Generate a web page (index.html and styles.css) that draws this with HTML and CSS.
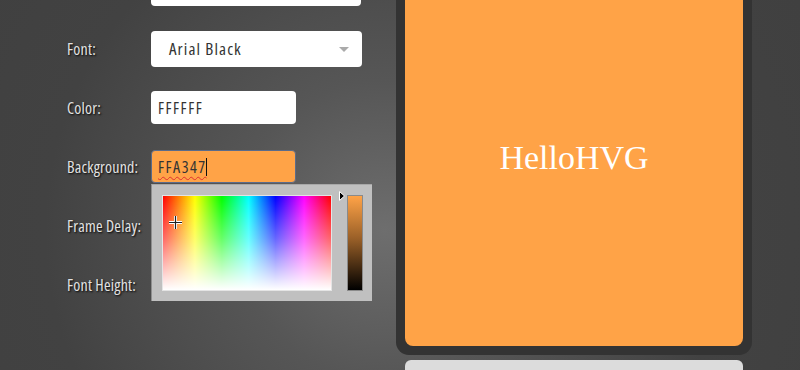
FILE: index.html
```html
<!DOCTYPE html>
<html lang="en">
<head>
    <meta charset="UTF-8">
    <meta name="viewport" content="width=device-width, initial-scale=1.0">
    <title>HVG Text Generator</title>
    <link rel="stylesheet" href="styles.css">
</head>
<body>
    <div class="page">
        <div class="settings">
            <!-- first row is scrolled out of view -->
            <div class="row">
                <span class="label"></span>
                <div class="field wide"></div>
            </div>
            <div class="row">
                <label class="label">Font:</label>
                <div class="field select">
                    Arial Black
                    <span class="caret"></span>
                </div>
            </div>
            <div class="row">
                <label class="label">Color:</label>
                <div class="field">FFFFFF</div>
            </div>
            <div class="row">
                <label class="label">Background:</label>
                <div class="field focused">
                    <span class="typo">FFA347</span><span class="cursor"></span>
                    <!-- colour picker popup -->
                    <div class="picker">
                        <div class="spectrum">
                            <svg class="cross" width="15" height="15" viewBox="0 0 15 15">
                                <path d="M7.5 1v13M1 7.5h13" stroke="#fff" stroke-width="3"/>
                                <path d="M7.5 1v13M1 7.5h13" stroke="#222" stroke-width="1.2"/>
                            </svg>
                        </div>
                        <div class="slider-wrap">
                            <svg class="pointer" width="6" height="10" viewBox="0 0 6 10">
                                <path d="M0.5 0.5L5.5 5L0.5 9.5Z" fill="#000" stroke="#fff" stroke-width="1"/>
                            </svg>
                            <div class="slider"></div>
                        </div>
                    </div>
                </div>
            </div>
            <div class="row">
                <label class="label">Frame Delay:</label>
                <div class="field">100</div>
            </div>
            <div class="row">
                <label class="label">Font Height:</label>
                <div class="field">32</div>
            </div>
        </div>

        <div class="preview-col">
            <div class="frame">
                <div class="preview">HelloHVG</div>
            </div>
            <div class="actions"></div>
        </div>
    </div>
</body>
</html>
```

FILE: styles.css
```css
body {
    margin: 0;
    height: 370px;
    overflow: hidden;
    font-family: "Open Sans", "Liberation Sans", sans-serif;
    background: radial-gradient(circle at 385px 230px, #6e6e6e 0, #565656 150px, #424242 340px, #404040 100%);
    background-color: #404040;
}
.page {
    display: flex;
    margin-top: -40px;
}
.settings {
    width: 329px;
    padding-left: 67px;
}
.row {
    display: flex;
    align-items: center;
    height: 59px;
}
.label {
    width: 84px;
    font-size: 16px;
    font-stretch: condensed;
    letter-spacing: 0.2px;
    color: #e2e2e2;
    text-shadow: 1px 1px 2px #000;
}
.field {
    position: relative;
    box-sizing: border-box;
    width: 145px;
    height: 33px;
    padding: 0 7px;
    display: flex;
    align-items: center;
    background: #fff;
    border-radius: 4px;
    font-size: 16px;
    font-stretch: condensed;
    letter-spacing: 1.5px;
    color: #333;
}
.wide {
    width: 210px;
}
.select {
    width: 211px;
    height: 36px;
    padding-left: 18px;
    font-size: 17px;
    letter-spacing: 1.1px;
}
.caret {
    position: absolute;
    right: 13px;
    top: 16px;
    border-left: 5px solid transparent;
    border-right: 5px solid transparent;
    border-top: 5px solid #aaa;
}
.focused {
    background: #ffa347;
    border: 1px solid #5b6b8a;
    padding-left: 6px;
}
.typo {
    text-decoration: underline wavy #e03030;
    text-decoration-thickness: 1px;
    text-underline-offset: 3px;
}
.cursor {
    width: 1px;
    height: 18px;
    margin-left: -1px;
    background: #111;
}
.picker {
    position: absolute;
    left: -1px;
    top: 33px;
    z-index: 2;
    box-sizing: border-box;
    width: 221px;
    height: 117px;
    display: flex;
    gap: 15px;
    padding: 10px 9px 10px 10px;
    background: #c0c0c0;
    border-left: 1px solid #8e8e8e;
    border-top: 1px solid #a8a8a8;
}
.spectrum {
    position: relative;
    width: 170px;
    height: 96px;
    box-sizing: border-box;
    border: 1px solid #e4e4e4;
    background:
        linear-gradient(to bottom, rgba(255,255,255,0) 0%, rgba(255,255,255,0.4) 45%, #fff 100%),
        linear-gradient(to right, #f00 0%, #ff0 19%, #0f0 35%, #0ff 51%, #00f 67%, #f0f 84%, #f00 100%);
}
.cross {
    position: absolute;
    left: 5px;
    top: 19px;
}
.slider-wrap {
    position: relative;
}
.pointer {
    position: absolute;
    left: -8px;
    top: -4px;
}
.slider {
    box-sizing: border-box;
    width: 16px;
    height: 96px;
    border: 1px solid #8a8a8a;
    background: linear-gradient(to bottom, #ffa347 0%, #9a6028 45%, #000 100%);
}
.preview-col {
    width: 356px;
    display: flex;
    flex-direction: column;
    gap: 5px;
}
.frame {
    background: #333333;
    border-radius: 13px;
    padding: 9px;
}
.preview {
    height: 377px;
    display: flex;
    align-items: center;
    justify-content: center;
    background: #ffa347;
    border-radius: 8px;
    font-family: "Liberation Serif", serif;
    font-size: 34px;
    color: #fff;
}
.actions {
    margin: 0 9px;
    height: 10px;
    background: #dcdcdc;
    border-radius: 6px 6px 0 0;
}
```
